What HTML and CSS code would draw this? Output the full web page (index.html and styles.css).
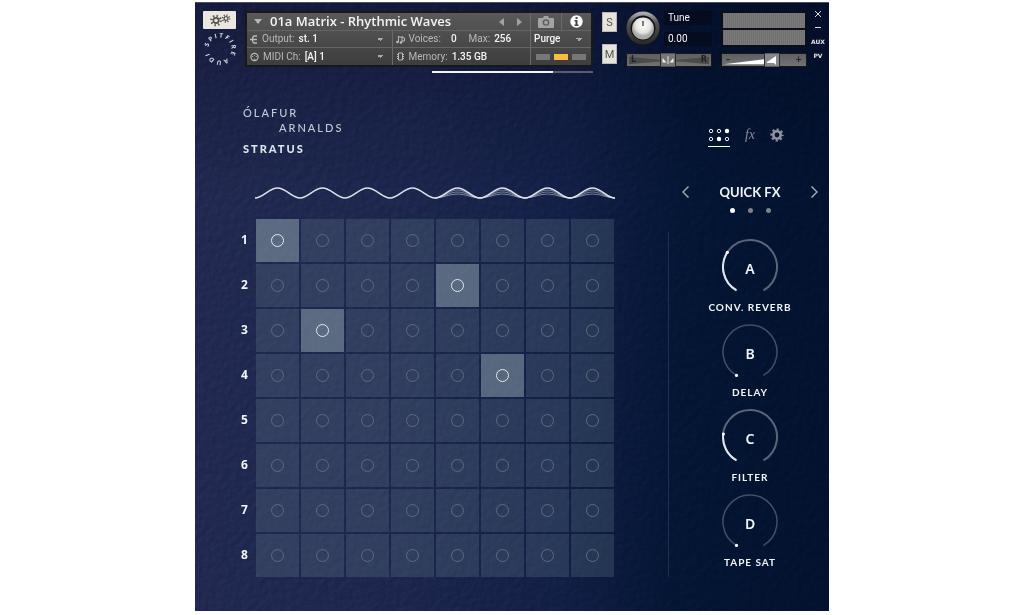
FILE: index.html
```html
<!DOCTYPE html>
<html lang="en">
<head>
<meta charset="utf-8">
<meta name="viewport" content="width=device-width, initial-scale=1">
<title>Stratus</title>
<link rel="stylesheet" href="styles.css">
</head>
<body>
<div class="panel">
  <svg class="texture" aria-hidden="true">
    <filter id="paper" x="0" y="0" width="100%" height="100%" color-interpolation-filters="sRGB">
      <feTurbulence type="fractalNoise" baseFrequency="0.16" numOctaves="4" seed="4"/>
      <feDiffuseLighting lighting-color="#aaa" surfaceScale="1.4"><feDistantLight azimuth="225" elevation="45"/></feDiffuseLighting>
    </filter>
    <rect width="100%" height="100%" filter="url(#paper)"/>
  </svg>

  <header class="header">
    <div class="brand">
      <button class="wrench" aria-label="Edit instrument">
        <svg width="26" height="14" viewBox="0 0 26 14">
          <g fill="none" stroke="#55544f"><circle cx="9" cy="7.500" r="2.600" stroke-width="1.600"/><circle cx="9" cy="7.500" r="4.600" stroke-width="2.400" stroke-dasharray="1.400 2.213"/>
          <circle cx="19" cy="5.500" r="1.900" stroke-width="1.200"/><circle cx="19" cy="5.500" r="3.400" stroke-width="1.800" stroke-dasharray="1.100 1.570"/></g>
        </svg>
      </button>
      <svg class="ring" width="34" height="34" viewBox="0 0 34 34">
        <path id="ring" d="M5.500 17A11.500 11.500 0 1 1 28.500 17A11.500 11.500 0 1 1 5.500 17" fill="none"/>
        <text class="ring-text"><textPath href="#ring" startOffset="2">SPITFIRE AUDIO</textPath></text>
      </svg>
    </div>

    <div class="rack-column">
      <div class="rack">
        <div class="preset">
          <svg width="8" height="5" viewBox="0 0 8 5"><path d="M0 0h8L4 5z" fill="#b5b5b5"/></svg>
          <h1 class="preset-name">01a Matrix - Rhythmic Waves</h1>
          <button class="bare" aria-label="Previous preset"><svg width="5" height="8" viewBox="0 0 5 8"><path d="M5 0v8L0 4z" fill="#a2a2a2"/></svg></button>
          <button class="bare" aria-label="Next preset"><svg width="5" height="8" viewBox="0 0 5 8"><path d="M0 0v8l5-4z" fill="#a2a2a2"/></svg></button>
        </div>
        <div class="toggles">
          <button class="bare toggle" aria-label="Snapshots"><svg width="16" height="12" viewBox="0 0 16 12"><path d="M1 2h4l1-2h4l1 2h4q1 0 1 1v8q0 1-1 1H1q-1 0-1-1V3q0-1 1-1z" fill="#a3a3a3"/><circle cx="8" cy="6.500" r="2.600" fill="none" stroke="#5b5b5b" stroke-width="1.400"/></svg></button>
          <button class="bare toggle toggle-on" aria-label="Instrument info"><svg width="13" height="13" viewBox="0 0 13 13"><circle cx="6.500" cy="6.500" r="6.200" fill="#fff"/><path d="M5.500 2h2v2h-2zM4.500 5h3v4.500h1V11h-4V9.500h1v-3h-1z" fill="#444"/></svg></button>
        </div>
        <div class="field">
          <svg width="8" height="9" viewBox="0 0 8 9"><path d="M0 4.500h2M7 1H4.500Q2.500 1 2.500 4.500T4.500 8H7M2.500 4.500H7" fill="none" stroke="#bbb" stroke-width="1.300"/></svg>
          <label for="out">Output:</label>
          <select id="out"><option>st. 1</option></select>
        </div>
        <div class="field">
          <svg width="9" height="9" viewBox="0 0 9 9"><path d="M2.500 1v6M2.500 1.500l3 1M6 1v6M6 2l2.500 1v3H6" fill="none" stroke="#bbb"/><circle cx="1.500" cy="7" r="1.300" fill="#bbb"/><circle cx="5" cy="7.500" r="1.300" fill="#bbb"/></svg>
          <span>Voices:</span><b class="voices">0</b><span>Max:</span><b>256</b>
        </div>
        <div class="field purge"><select aria-label="Purge"><option>Purge</option></select></div>
        <div class="field">
          <svg width="9" height="10" viewBox="0 0 10 10"><circle cx="5" cy="5" r="4" fill="none" stroke="#bbb" stroke-width="1.300"/><path d="M2.500 4h1v1h-1zM6.500 4h1v1h-1zM4.500 3h1v1h-1zM4 7h2v1H4z" fill="#bbb"/></svg>
          <label for="midi">MIDI Ch:</label>
          <select id="midi"><option>[A] 1</option></select>
        </div>
        <div class="field">
          <svg width="9" height="9" viewBox="0 0 9 9"><path d="M2.500 1h4v7h-4zM1 2.500h1M1 4.500h1M1 6.500h1M7 2.500h1M7 4.500h1M7 6.500h1" fill="none" stroke="#bbb"/></svg>
          <span>Memory:</span><b>1.35 GB</b>
        </div>
        <div class="leds"><i></i><i class="led-on"></i><i></i></div>
      </div>
      <div class="load"></div>
    </div>

    <div class="solo-mute"><button>S</button><button>M</button></div>

    <div class="tune">
      <div class="tune-row">
        <div class="control">
          <svg width="34" height="36" viewBox="0 0 34 36">
            <defs><radialGradient id="cap" cx=".5" cy=".35"><stop offset="0" stop-color="#fff"/><stop offset=".7" stop-color="#e4e4df"/><stop offset="1" stop-color="#a9a9a5"/></radialGradient>
            <linearGradient id="rim" y2="1" x2="0"><stop offset="0" stop-color="#aaa"/><stop offset=".3" stop-color="#555"/><stop offset="1" stop-color="#2b2b2b"/></linearGradient></defs>
            <circle cx="17" cy="17.500" r="17" fill="#10131c"/><circle cx="17" cy="17" r="14.500" fill="none" stroke="url(#rim)" stroke-width="4"/>
            <circle cx="17" cy="17.500" r="11" fill="url(#cap)"/><path d="M17 10v5" stroke="#444" stroke-width="1.400"/>
          </svg>
          <input type="range" aria-label="Tune knob">
        </div>
        <div class="tune-text"><label for="tune">Tune</label><input id="tune" value="0.00"></div>
      </div>
      <div class="slider">
        <svg viewBox="0 0 84 13" preserveAspectRatio="none"><path d="M2 3l40 4L2 11zM82 3L42 7l40 4z" fill="#4b4b4b"/></svg>
        <span>L</span>
        <svg class="thumb" width="16" height="14" viewBox="0 0 16 14"><path d="M.5 0h15v14H.5z" fill="#777" stroke="#2b2b2b"/><path d="M8 3v8" stroke="#ddd"/><path d="M2.500 5L6.500 9.500h-4zM13.500 5L9.500 9.500h4z" fill="#eee"/></svg>
        <span>R</span>
        <input type="range" aria-label="Pan">
      </div>
    </div>

    <div class="meters">
      <div class="meter-box"><i></i><i></i></div>
      <div class="slider volume">
        <svg viewBox="0 0 84 13" preserveAspectRatio="none"><path d="M2 11L55 4v7z" fill="#fff"/></svg>
        <span class="minus">–</span>
        <svg class="thumb" width="16" height="14" viewBox="0 0 16 14"><path d="M.5 0h15v14H.5z" fill="#888" stroke="#2b2b2b"/><path d="M3 9l9-6v9l-2-2H3z" fill="#fff"/></svg>
        <span>+</span>
        <input type="range" aria-label="Volume" value="62">
      </div>
    </div>

    <div class="window"><button aria-label="Close"><svg width="6" height="6" viewBox="0 0 6 6"><path d="M0 0l6 6M6 0L0 6" stroke="#ddd"/></svg></button><button aria-label="Minimize"><svg width="6" height="2"><path d="M0 0h6v1H0z" fill="#ddd"/></svg></button><button>AUX</button><button>PV</button></div>
  </header>

  <main class="main">
    <section class="matrix">
      <div class="logo"><span>ÓLAFUR</span><span class="last-name">ARNALDS</span><strong>STRATUS</strong></div>
      <svg class="wave" viewBox="0 0 360 14" fill="none"><g id="waves"></g></svg>
      <div class="grid" id="grid"></div>
    </section>
    <div class="divider"></div>
    <aside class="side">
      <nav class="tabs">
        <button class="bare tab tab-on" aria-label="Matrix"><svg width="22" height="14" viewBox="0 0 22 14"><g fill="none" stroke="#e8ecf0"><circle cx="3" cy="3" r="1.700"/><circle cx="11" cy="3" r="1.700"/><circle cx="3" cy="11" r="1.700"/><circle cx="19" cy="11" r="1.700"/></g><circle cx="19" cy="3" r="2.200" fill="#fff"/><circle cx="11" cy="11" r="2.200" fill="#fff"/></svg></button>
        <button class="bare tab fx">fx</button>
        <button class="bare tab" aria-label="Settings"><svg width="14" height="14" viewBox="0 0 14 14"><g fill="none" stroke="#8d93a0"><circle cx="7" cy="7" r="3.700" stroke-width="2.600"/><circle cx="7" cy="7" r="5.600" stroke-width="2" stroke-dasharray="2.200 2.198" stroke-dashoffset="1.100"/></g></svg></button>
      </nav>
      <div class="fx-nav">
        <button class="bare" aria-label="Previous page"><svg width="7" height="12" viewBox="0 0 7 12"><path d="M6.500.5L1 6l5.500 5.500" fill="none" stroke="#a9aeb6" stroke-width="1.400"/></svg></button>
        <h2>QUICK FX</h2>
        <button class="bare" aria-label="Next page"><svg width="7" height="12" viewBox="0 0 7 12"><path d="M.5.5L6 6 .5 11.500" fill="none" stroke="#a9aeb6" stroke-width="1.400"/></svg></button>
      </div>
      <div class="dots"><i class="dot-on"></i><i></i><i></i></div>
      <div class="knobs">
        <div class="knob"><div class="control">
          <svg width="56" height="56" viewBox="0 0 56 56"><path class="track" d="M14.500 51.400A27 27 0 1 1 41.500 51.400"/><path class="value" d="M14.500 51.400A27 27 0 0 1 5.400 13.300"/><circle class="pip" cx="5.400" cy="13.300" r="1.600"/></svg>
          <span class="letter">A</span><input id="ka" type="range" value="33"></div><label for="ka">CONV. REVERB</label></div>
        <div class="knob"><div class="control">
          <svg width="56" height="56" viewBox="0 0 56 56"><path class="track thin" d="M14.500 51.400A27 27 0 1 1 41.500 51.400"/><circle class="pip" cx="14.500" cy="51.400" r="1.600"/></svg>
          <span class="letter">B</span><input id="kb" type="range" value="0"></div><label for="kb">DELAY</label></div>
        <div class="knob"><div class="control">
          <svg width="56" height="56" viewBox="0 0 56 56"><path class="track" d="M14.500 51.400A27 27 0 1 1 41.500 51.400"/><path class="value" d="M14.500 51.400A27 27 0 0 1 1.200 25"/><circle class="pip" cx="1.400" cy="25" r="1.600"/></svg>
          <span class="letter">C</span><input id="kc" type="range" value="22"></div><label for="kc">FILTER</label></div>
        <div class="knob"><div class="control">
          <svg width="56" height="56" viewBox="0 0 56 56"><path class="track thin" d="M14.500 51.400A27 27 0 1 1 41.500 51.400"/><circle class="pip" cx="14.500" cy="51.400" r="1.600"/></svg>
          <span class="letter">D</span><input id="kd" type="range" value="0"></div><label for="kd">TAPE SAT</label></div>
      </div>
    </aside>
  </main>
</div>
<script src="matrix.js"></script>
</body>
</html>
```
FILE: styles.css
```css
* { box-sizing: border-box; }
body { margin: 0; padding: 2px 0 4px; background: #fff; font-family: Roboto, sans-serif; }
button, input, select { font: inherit; color: inherit; margin: 0; padding: 0; border: 0; background: none; }
svg { display: block; flex: none; }
h1, h2 { margin: 0; }
.bare { display: flex; align-items: center; justify-content: center; }

.panel {
  position: relative; isolation: isolate; max-width: 634px; margin: 0 auto; padding: 8px 0 34px;
  border-top: 1px solid #4c4f58; color: #f2f4f6;
  background:
    linear-gradient(180deg, rgba(4, 8, 32, .4) 0, rgba(4, 8, 32, 0) 32%),
    linear-gradient(92deg, #222a52 0, #1d274f 35%, #132048 58%, #041635 76%, #03132f 100%);
}
.texture { position: absolute; inset: 0; z-index: -1; width: 100%; height: 100%; mix-blend-mode: soft-light; opacity: .3; }

.header { display: flex; align-items: flex-start; padding: 0 3px 0 8px; gap: 9px; }
.brand { width: 33px; display: flex; flex-direction: column; align-items: center; gap: 3px; }
.wrench { width: 33px; height: 18px; display: flex; align-items: center; justify-content: center; background: #e9e7df; border-radius: 1px; }
.ring { overflow: visible; }
.ring-text { font: 900 6px Lato, sans-serif; letter-spacing: 2px; fill: #dde2ea; }

.rack-column { flex: 1; min-width: 0; display: flex; flex-direction: column; align-items: flex-end; gap: 4px; }
.rack {
  width: 100%; display: grid; grid-template-columns: 145fr 138fr 60px; grid-template-rows: 18px 17px 17px;
  border: 2px solid #16181c; background: linear-gradient(#595959, #4a4a4a 55%, #3d3d3d);
  font-size: 10px; line-height: 16px;
}
.rack > * { border-right: 1px solid #6a6a6a; border-bottom: 1px solid #656565; min-width: 0; }
.rack > :nth-last-child(-n+3) { border-bottom: 0; }
.preset { grid-column: span 2; display: flex; align-items: center; gap: 13px; padding: 0 8px 0 7px; }
.preset-name { flex: 1; font: 600 13px/17px "Open Sans", sans-serif; white-space: nowrap; margin-left: -5px; }
.toggles { display: flex; }
.rack > .toggles, .rack > .purge, .rack > .leds { border-right: 0; }
.toggle { flex: 1; }
.toggle-on { border-left: 1px solid #6a6a6a; }
.field { display: flex; align-items: center; gap: 4px; padding: 0 6px 0 3px; color: #b9b9b9; white-space: nowrap; }
.field b { font-weight: 500; color: #f4f4f4; }
.field .voices { margin: 0 8px 0 6px; }
.field select {
  flex: 1; min-width: 0; appearance: none; color: #f4f4f4; font-weight: 500;
  background: linear-gradient(to bottom left, #aaa 50%, transparent 50%) right 6px center / 3px 3px no-repeat,
    linear-gradient(to bottom right, #aaa 50%, transparent 50%) right 3px center / 3px 3px no-repeat;
}
.leds { display: flex; align-items: center; justify-content: center; gap: 4px; }
.leds i { width: 14px; height: 6px; background: #777; }
.leds .led-on { background: #f8bd3d; }
.load { width: 161px; height: 2px; background: linear-gradient(90deg, #f3f3f3 75%, #5c5f68 75%); }

.solo-mute { display: flex; flex-direction: column; gap: 12px; padding-top: 1px; }
.solo-mute button { width: 15px; height: 20px; background: #e6e4dd; border: 1px solid #b9b8b2; color: #555; font-size: 11px; }
.tune { width: 86px; display: flex; flex-direction: column; gap: 6px; }
.tune-row { display: flex; gap: 4px; }
.control { position: relative; }
.control > input, .slider > input { position: absolute; inset: 0; width: 100%; height: 100%; opacity: 0; cursor: pointer; }
.tune-text { flex: 1; display: flex; flex-direction: column; gap: 7px; font: 10px/14px Roboto, sans-serif; }
.tune-text > * { width: 100%; height: 14px; padding-left: 4px; background: #050c20; }
.slider { position: relative; display: flex; align-items: center; justify-content: space-between; height: 14px; padding: 0 4px; border: 1px solid #15171d; background: linear-gradient(#5f5f5f, #727272); color: #222; font: 700 8px/12px "DejaVu Sans", sans-serif; }
.slider > svg:first-child { position: absolute; inset: 0; width: 100%; height: 100%; }
.slider > .thumb, .slider > span { position: relative; }
.slider .minus { margin-right: 18px; }
.meters { width: 86px; display: flex; flex-direction: column; gap: 6px; }
.meter-box { display: flex; flex-direction: column; gap: 2px; padding: 2px; background: #0b0e17; }
.meter-box i { height: 15px; background: repeating-linear-gradient(90deg, #707070 0 1px, #7a7a7a 1px 2px); }
.window { flex: none; width: 16px; margin: -4px 0 0 -6px; display: flex; flex-direction: column; font: 700 6px/14px "DejaVu Sans", sans-serif; color: #e4e4e4; }
.window button { height: 14px; display: flex; align-items: center; justify-content: center; }

.main { display: grid; grid-template-columns: minmax(0, 1fr) 1px auto; padding: 32px 11px 0 47px; }
.matrix { padding-right: 54px; }
.logo { display: flex; flex-direction: column; font: 500 11px/15px Lato, sans-serif; letter-spacing: 2px; color: #c2cbd4; padding-left: 1px; }
.last-name { padding-left: 36px; }
.logo strong { margin-top: 6px; font-weight: 900; color: #dbe5ea; }
.wave { width: calc(100% - 12px); margin: 30px 0 19px 13px; overflow: visible; stroke: #dfe3ea; stroke-width: 1.5; }
.wave .faint { stroke-width: 1; opacity: .5; }
.grid { display: grid; grid-template-columns: 12px repeat(8, 1fr); gap: 2px; }
.row-label { align-self: center; font: 700 12px/16px "Open Sans", sans-serif; margin-left: -1px; padding-bottom: 2px; }
.cell { aspect-ratio: 1; display: flex; align-items: center; justify-content: center; background: rgba(116, 142, 152, .23); color: #5f6b7e; }
.cell::before { content: ""; width: 11px; height: 11px; margin: 0 1px 1px 0; border: 1px solid; border-radius: 50%; }
.cell-on { background: rgba(151, 173, 180, .5); color: #e3eaed; }
.divider { margin-top: 127px; background: rgba(90, 110, 145, .3); }

.side { width: 136px; margin-left: 13px; padding-top: 23px; }
.tabs { display: flex; gap: 13px; padding-left: 26px; height: 19px; }
.tab { height: 14px; }
.tab-on { height: 19px; align-items: flex-start; border-bottom: 1px solid #fff; }
.fx { width: 14px; font: italic 14px/14px "Liberation Serif", serif; color: #858c9b; }
.fx-nav { display: flex; align-items: center; justify-content: space-between; margin-top: 36px; height: 18px; }
.fx-nav h2 { font: 700 13px/18px Lato, sans-serif; }
.dots { display: flex; justify-content: center; gap: 13px; margin-top: 7px; }
.dots i { width: 5px; height: 5px; border-radius: 50%; background: #7d818a; }
.dots .dot-on { background: #fff; }
.knobs { display: flex; flex-direction: column; gap: 9px; margin-top: 26px; }
.knob { display: flex; flex-direction: column; align-items: center; gap: 4px; font: 700 10px/16px Lato, sans-serif; letter-spacing: 1px; }
.letter { position: absolute; inset: 0; display: flex; align-items: center; justify-content: center; padding-top: 4px; font: 600 14px/16px "Noto Sans", sans-serif; letter-spacing: 0; }
.track { fill: none; stroke: #5c6578; stroke-width: 2; }
.thin { stroke: #454e64; stroke-width: 1.5; }
.value { fill: none; stroke: #e3e6ec; stroke-width: 2; }
.pip { fill: #fff; }
```
FILE: matrix.js
```js
// Steps that are switched on, as [row, column].
const active = [[1, 1], [2, 5], [3, 2], [4, 6]];
const grid = document.getElementById('grid');
for (let row = 1; row <= 8; row++) {
  const label = document.createElement('span');
  label.className = 'row-label';
  label.textContent = row;
  grid.append(label);
  for (let col = 1; col <= 8; col++) {
    const cell = document.createElement('button');
    const on = active.some(([r, c]) => r === row && c === col);
    cell.className = on ? 'cell cell-on' : 'cell';
    cell.setAttribute('aria-label', `Row ${row}, wave ${col}`);
    cell.setAttribute('aria-pressed', on);
    grid.append(cell);
  }
}

// One hump per column; the last four carry fainter inner waves.
const hump = (col, top) => {
  const x = col * 45;
  return `M${x} 12C${x + 8} 12 ${x + 14} ${top} ${x + 22.5} ${top}S${x + 37} 12 ${x + 45} 12`;
};
let paths = '';
for (let col = 0; col < 8; col++) {
  paths += `<path d="${hump(col, 2)}"/>`;
  if (col > 3) for (const top of [4, 6, 8]) paths += `<path class="faint" d="${hump(col, top)}"/>`;
}
document.getElementById('waves').innerHTML = paths;
```
